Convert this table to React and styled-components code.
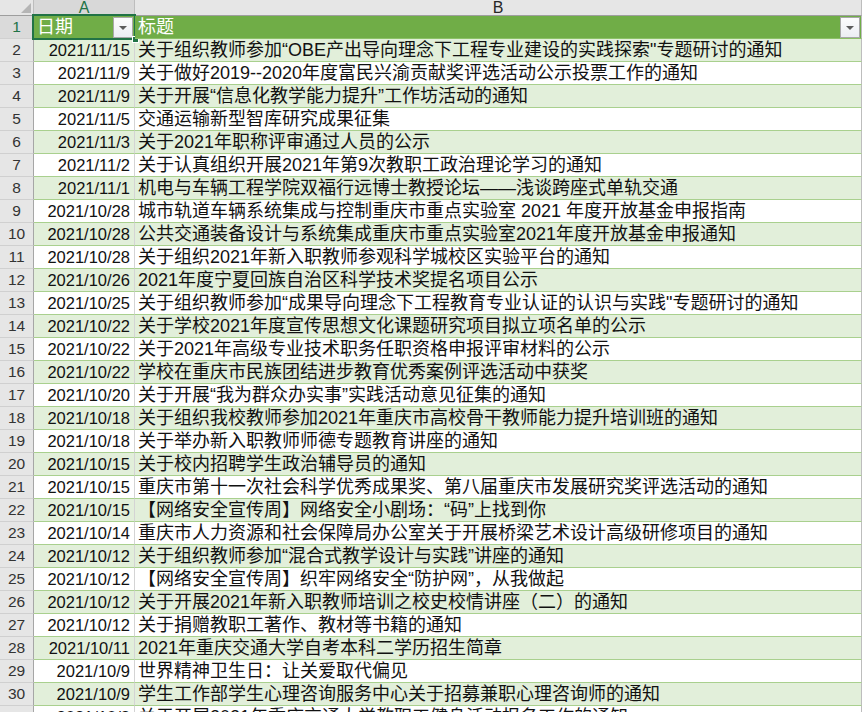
import React from 'react';
import styled, { createGlobalStyle } from 'styled-components';

// Notice list as it sits in the sheet: [date, title]
const rows = [
  ['2021/11/15', '关于组织教师参加“OBE产出导向理念下工程专业建设的实践探索"专题研讨的通知'],
  ['2021/11/9', '关于做好2019--2020年度富民兴渝贡献奖评选活动公示投票工作的通知'],
  ['2021/11/9', '关于开展“信息化教学能力提升”工作坊活动的通知'],
  ['2021/11/5', '交通运输新型智库研究成果征集'],
  ['2021/11/3', '关于2021年职称评审通过人员的公示'],
  ['2021/11/2', '关于认真组织开展2021年第9次教职工政治理论学习的通知'],
  ['2021/11/1', '机电与车辆工程学院双福行远博士教授论坛——浅谈跨座式单轨交通'],
  ['2021/10/28', '城市轨道车辆系统集成与控制重庆市重点实验室 2021 年度开放基金申报指南'],
  ['2021/10/28', '公共交通装备设计与系统集成重庆市重点实验室2021年度开放基金申报通知'],
  ['2021/10/28', '关于组织2021年新入职教师参观科学城校区实验平台的通知'],
  ['2021/10/26', '2021年度宁夏回族自治区科学技术奖提名项目公示'],
  ['2021/10/25', '关于组织教师参加“成果导向理念下工程教育专业认证的认识与实践"专题研讨的通知'],
  ['2021/10/22', '关于学校2021年度宣传思想文化课题研究项目拟立项名单的公示'],
  ['2021/10/22', '关于2021年高级专业技术职务任职资格申报评审材料的公示'],
  ['2021/10/22', '学校在重庆市民族团结进步教育优秀案例评选活动中获奖'],
  ['2021/10/20', '关于开展“我为群众办实事”实践活动意见征集的通知'],
  ['2021/10/18', '关于组织我校教师参加2021年重庆市高校骨干教师能力提升培训班的通知'],
  ['2021/10/18', '关于举办新入职教师师德专题教育讲座的通知'],
  ['2021/10/15', '关于校内招聘学生政治辅导员的通知'],
  ['2021/10/15', '重庆市第十一次社会科学优秀成果奖、第八届重庆市发展研究奖评选活动的通知'],
  ['2021/10/15', '【网络安全宣传周】网络安全小剧场：“码”上找到你'],
  ['2021/10/14', '重庆市人力资源和社会保障局办公室关于开展桥梁艺术设计高级研修项目的通知'],
  ['2021/10/12', '关于组织教师参加“混合式教学设计与实践”讲座的通知'],
  ['2021/10/12', '【网络安全宣传周】织牢网络安全“防护网”，从我做起'],
  ['2021/10/12', '关于开展2021年新入职教师培训之校史校情讲座（二）的通知'],
  ['2021/10/12', '关于捐赠教职工著作、教材等书籍的通知'],
  ['2021/10/11', '2021年重庆交通大学自考本科二学历招生简章'],
  ['2021/10/9', '世界精神卫生日：让关爱取代偏见'],
  ['2021/10/9', '学生工作部学生心理咨询服务中心关于招募兼职心理咨询师的通知'],
  ['2021/10/8', '关于开展2021年重庆交通大学教职工健身活动报名工作的通知'],
];

const GlobalStyle = createGlobalStyle`
  html, body {
    margin: 0;
    padding: 0;
    background: #ffffff;
  }
  body {
    width: 862px;
    height: 712px;
    overflow: hidden;
    font-family: "Liberation Sans", "Noto Sans CJK SC", sans-serif;
  }
`;

const Sheet = styled.div`
  display: grid;
  grid-template-columns: 34px 101px 727px;
  grid-template-rows: 16px;
  grid-auto-rows: 23px;
  width: 862px;
`;

const Corner = styled.div`
  box-sizing: border-box;
  position: relative;
  background: #e6e6e6;
  border-right: 1px solid #bdbdbd;
  border-bottom: 1px solid #9e9e9e;

  svg {
    position: absolute;
    right: 2px;
    bottom: 2px;
  }
`;

const ColHeader = styled.div`
  box-sizing: border-box;
  background: ${p => (p.$selected ? '#d8d8d8' : '#e6e6e6')};
  color: ${p => (p.$selected ? '#217346' : '#262626')};
  border-right: 1px solid #bdbdbd;
  border-bottom: 1px solid #9e9e9e;
  font-size: 16px;
  line-height: 15px;
  text-align: center;
`;

const RowNum = styled.div`
  box-sizing: border-box;
  background: ${p => (p.$selected ? '#dadada' : '#e6e6e6')};
  color: ${p => (p.$selected ? '#217346' : '#333333')};
  border-right: 1px solid #a6a6a6;
  border-bottom: 1px solid #d0d0d0;
  font-size: 15.5px;
  line-height: 22px;
  text-align: center;
`;

const TitleCell = styled.div`
  box-sizing: border-box;
  position: relative;
  display: flex;
  align-items: flex-end;
  background: #70ad47;
  color: #ffffff;
  border-right: 1px solid ${p => (p.$last ? '#bdbdbd' : '#70ad47')};
  border-bottom: 1px solid #8cc167;
  padding-left: 3px;
  font-size: 18px;
  line-height: 20px;
  white-space: nowrap;
`;

const Label = styled.span`
  flex: 1;
  padding-bottom: 1px;
`;

const FilterButton = styled.div`
  box-sizing: border-box;
  align-self: flex-start;
  display: flex;
  align-items: center;
  justify-content: center;
  width: 20px;
  height: 21px;
  margin: 1px 1px 0 0;
  border: 1px solid #a8a8a8;
  background: linear-gradient(#fcfcfd, #eceef3);

  &::after {
    content: '';
    border-left: 4px solid transparent;
    border-right: 4px solid transparent;
    border-top: 4px solid #5c5c5c;
    margin-top: 1px;
  }
`;

const Selection = styled.div`
  position: absolute;
  top: -2px;
  left: -2px;
  right: -2px;
  bottom: -2px;
  border: 2px solid #217346;
  pointer-events: none;
`;

const FillHandle = styled.div`
  position: absolute;
  right: -5px;
  bottom: -5px;
  width: 5px;
  height: 5px;
  background: #217346;
  border: 1px solid #ffffff;
`;

const DataCell = styled.div`
  box-sizing: border-box;
  display: flex;
  align-items: flex-end;
  justify-content: ${p => (p.$right ? 'flex-end' : 'flex-start')};
  background: ${p => (p.$band ? '#e2efda' : '#ffffff')};
  color: #111111;
  border-right: 1px solid ${p => (p.$last ? '#bdbdbd' : '#d4d4d4')};
  border-bottom: 1px solid #a9d08e;
  padding: 0 ${p => (p.$right ? '4px' : '0')} 1px ${p => (p.$right ? '0' : '3px')};
  font-size: ${p => (p.$right ? '16.5px' : '18px')};
  line-height: 20px;
  white-space: nowrap;
  overflow: hidden;
`;

export default function App() {
  return (
    <>
      <GlobalStyle />
      <Sheet>
        <Corner>
          <svg width="10" height="10" viewBox="0 0 10 10">
            <polygon points="10,0 10,10 0,10" fill="#b5b5b5" />
          </svg>
        </Corner>
        <ColHeader $selected>A</ColHeader>
        <ColHeader>B</ColHeader>

        <RowNum $selected>1</RowNum>
        <TitleCell>
          <Label>日期</Label>
          <FilterButton />
          <Selection>
            <FillHandle />
          </Selection>
        </TitleCell>
        <TitleCell $last>
          <Label>标题</Label>
          <FilterButton />
        </TitleCell>

        {rows.map(([date, title], i) => {
          const band = i % 2 === 0;
          return (
            <React.Fragment key={i}>
              <RowNum>{i + 2}</RowNum>
              <DataCell $band={band} $right>{date}</DataCell>
              <DataCell $band={band} $last>{title}</DataCell>
            </React.Fragment>
          );
        })}
      </Sheet>
    </>
  );
}
